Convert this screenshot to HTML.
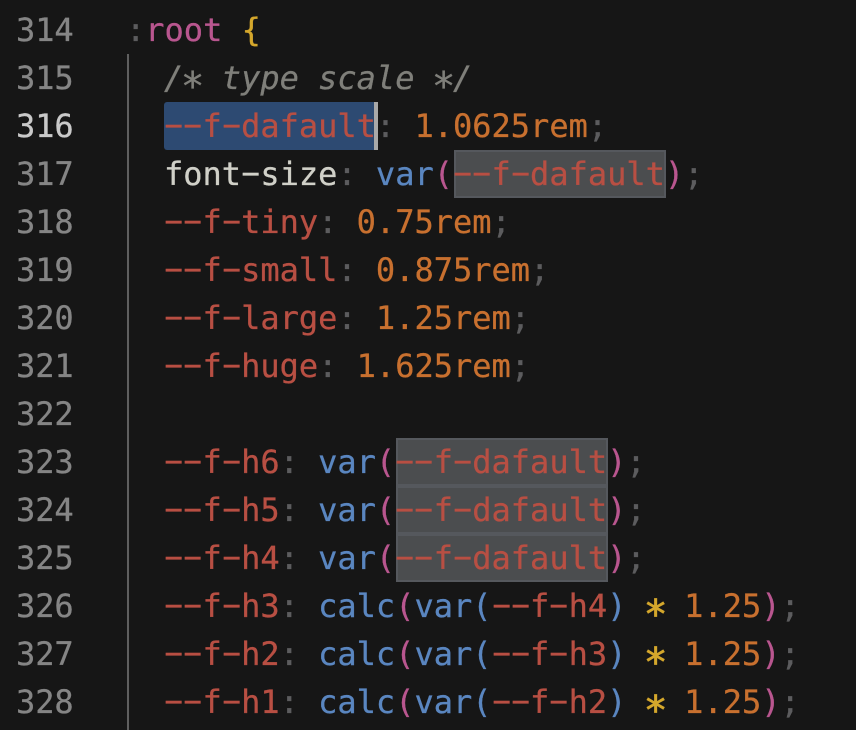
<!DOCTYPE html>
<html lang="en">
<head>
<meta charset="utf-8">
<title>CSS editor</title>
<style>
html,body{margin:0;padding:0;width:856px;height:730px;overflow:hidden;background:#161616}
#e{position:relative;width:856px;height:730px;background:#161616;font-family:"DejaVu Sans Mono","Liberation Mono",monospace;font-size:32px;line-height:48px;font-variant-ligatures:none;-webkit-text-stroke:.3px}
.n,.l{position:absolute;white-space:pre;height:48px}
.n{left:16px;color:#858585;letter-spacing:-.06px}
.l{left:164px}
.r{color:#b84f43}.p{color:#5c5c5e}.o{color:#c8702f}.b{color:#5a86c0}.k{color:#b9568f}.y{color:#d4a72c}.w{color:#d0d0c8}.c{color:#7f7f7a;font-style:italic}
.box{position:absolute;background:#4b4d4f;box-sizing:border-box;border:2px solid #55585d}
i{font-style:normal;display:inline-block;transform:translateY(-2px) scaleX(1.9)}
u{text-decoration:none;display:inline-block;transform:translateY(8px) scale(1.22);-webkit-text-stroke:.3px}
.y u{-webkit-text-stroke:.7px}
</style>
</head>
<body>
<div id="e">
<div style="position:absolute;left:164px;top:102px;width:210px;height:48px;background:#2d4a72;border-radius:3px 0 0 3px"></div>
<div style="position:absolute;left:374px;top:102px;width:4px;height:48px;background:#a9a9a9"></div>
<div style="position:absolute;left:127px;top:54px;width:2px;height:676px;background:#5f5f5f"></div>
<div class="box" style="left:454px;top:150px;width:212px;height:48px"></div>
<div class="box" style="left:396px;top:438px;width:212px;height:48px"></div>
<div class="box" style="left:396px;top:486px;width:212px;height:48px"></div>
<div class="box" style="left:396px;top:534px;width:212px;height:48px"></div>

<div class="n" style="top:6px">314</div>
<div class="n" style="top:54px">315</div>
<div class="n" style="top:102px;color:#c9c9c9">316</div>
<div class="n" style="top:150px">317</div>
<div class="n" style="top:198px">318</div>
<div class="n" style="top:246px">319</div>
<div class="n" style="top:294px">320</div>
<div class="n" style="top:342px">321</div>
<div class="n" style="top:390px">322</div>
<div class="n" style="top:438px">323</div>
<div class="n" style="top:486px">324</div>
<div class="n" style="top:534px">325</div>
<div class="n" style="top:582px">326</div>
<div class="n" style="top:630px">327</div>
<div class="n" style="top:678px">328</div>

<div class="l" style="top:6px;left:126px"><span class="p">:</span><span class="k">root</span> <span class="y">{</span></div>
<div class="l c" style="top:54px">/<u>*</u> type scale <u>*</u>/</div>
<div class="l" style="top:102px"><span class="r"><i>-</i><i>-</i>f<i>-</i>dafault</span><span class="p">:</span> <span class="o">1.0625rem</span><span class="p">;</span></div>
<div class="l" style="top:150px"><span class="w">font<i>-</i>size</span><span class="p">:</span> <span class="b">var</span><span class="k">(</span><span class="r"><i>-</i><i>-</i>f<i>-</i>dafault</span><span class="k">)</span><span class="p">;</span></div>
<div class="l" style="top:198px"><span class="r"><i>-</i><i>-</i>f<i>-</i>tiny</span><span class="p">:</span> <span class="o">0.75rem</span><span class="p">;</span></div>
<div class="l" style="top:246px"><span class="r"><i>-</i><i>-</i>f<i>-</i>small</span><span class="p">:</span> <span class="o">0.875rem</span><span class="p">;</span></div>
<div class="l" style="top:294px"><span class="r"><i>-</i><i>-</i>f<i>-</i>large</span><span class="p">:</span> <span class="o">1.25rem</span><span class="p">;</span></div>
<div class="l" style="top:342px"><span class="r"><i>-</i><i>-</i>f<i>-</i>huge</span><span class="p">:</span> <span class="o">1.625rem</span><span class="p">;</span></div>
<div class="l" style="top:438px"><span class="r"><i>-</i><i>-</i>f<i>-</i>h6</span><span class="p">:</span> <span class="b">var</span><span class="k">(</span><span class="r"><i>-</i><i>-</i>f<i>-</i>dafault</span><span class="k">)</span><span class="p">;</span></div>
<div class="l" style="top:486px"><span class="r"><i>-</i><i>-</i>f<i>-</i>h5</span><span class="p">:</span> <span class="b">var</span><span class="k">(</span><span class="r"><i>-</i><i>-</i>f<i>-</i>dafault</span><span class="k">)</span><span class="p">;</span></div>
<div class="l" style="top:534px"><span class="r"><i>-</i><i>-</i>f<i>-</i>h4</span><span class="p">:</span> <span class="b">var</span><span class="k">(</span><span class="r"><i>-</i><i>-</i>f<i>-</i>dafault</span><span class="k">)</span><span class="p">;</span></div>
<div class="l" style="top:582px"><span class="r"><i>-</i><i>-</i>f<i>-</i>h3</span><span class="p">:</span> <span class="b">calc</span><span class="k">(</span><span class="b">var(</span><span class="r"><i>-</i><i>-</i>f<i>-</i>h4</span><span class="b">)</span> <span class="y"><u>*</u></span> <span class="o">1.25</span><span class="k">)</span><span class="p">;</span></div>
<div class="l" style="top:630px"><span class="r"><i>-</i><i>-</i>f<i>-</i>h2</span><span class="p">:</span> <span class="b">calc</span><span class="k">(</span><span class="b">var(</span><span class="r"><i>-</i><i>-</i>f<i>-</i>h3</span><span class="b">)</span> <span class="y"><u>*</u></span> <span class="o">1.25</span><span class="k">)</span><span class="p">;</span></div>
<div class="l" style="top:678px"><span class="r"><i>-</i><i>-</i>f<i>-</i>h1</span><span class="p">:</span> <span class="b">calc</span><span class="k">(</span><span class="b">var(</span><span class="r"><i>-</i><i>-</i>f<i>-</i>h2</span><span class="b">)</span> <span class="y"><u>*</u></span> <span class="o">1.25</span><span class="k">)</span><span class="p">;</span></div>
</div>
</body>
</html>
